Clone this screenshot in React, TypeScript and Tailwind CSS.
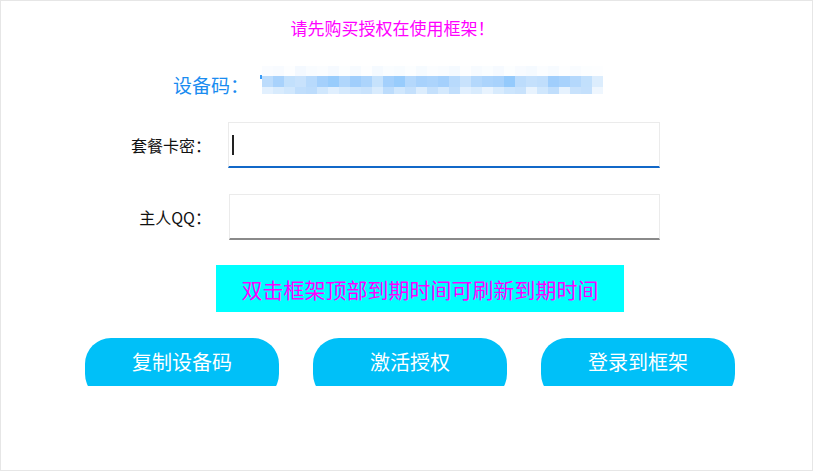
import React from "react";

const top = ["#fafcff","#f8fbff","#fdfeff","#f4f9ff","#f9fcff","#fbfdff","#f6faff","#fcfeff","#f7fbff","#fdfeff","#f5faff","#fafdff","#f8fcff","#fcfeff","#f6fbff","#fbfdff","#f9fcff","#f5faff","#fdfeff","#f7fbff","#fafdff","#f6faff","#fcfeff","#f8fbff","#f5faff","#fbfdff","#f7fbff","#fdfeff","#f9fcff","#fcfeff","#fdfeff"];
const mid = ["#bcdcfc","#a8d2fc","#c2e0fc","#c8e2fc","#b8dafc","#a4d0fc","#98ccfc","#b0d6fc","#a0cefc","#acd4fc","#c6e2fc","#a4d0fc","#98ccfc","#b4d8fc","#a8d2fc","#acd4fc","#a4d0fc","#b8dafc","#c8e2fc","#b4d8fc","#acd4fc","#a8d2fc","#94cafc","#bcdcfc","#c4e0fc","#c0defc","#a0cefc","#a8d2fc","#b4d8fc","#c2e0fc","#dcedfd"];
const bot = ["#e2f0fe","#d8ebfd","#d0e7fd","#c0defc","#bcdcfc","#d0e7fd","#e0effe","#d4e9fd","#cce5fd","#c8e2fc","#d8ebfd","#bcdcfc","#d0e7fd","#c4e0fc","#dcedfd","#c4e0fc","#d4e9fd","#c0defc","#e0effe","#d8ebfd","#e8f3fe","#d8ebfd","#cce5fd","#c8e2fc","#e8f3fe","#d0e7fd","#c0defc","#e6f2fe","#c8e2fc","#c4e0fc","#eef6fe"];

function Pixels() {
  return (
    <div className="flex flex-col">
      <div className="flex h-[10px]">
        {top.map((c, i) => (
          <div key={i} className="w-[11px] h-full" style={{ background: c }} />
        ))}
      </div>
      <div className="flex h-[11px]">
        {mid.map((c, i) => (
          <div key={i} className="w-[11px] h-full" style={{ background: c }} />
        ))}
      </div>
      <div className="flex h-[7px]">
        {bot.map((c, i) => (
          <div key={i} className="w-[11px] h-full" style={{ background: c }} />
        ))}
      </div>
    </div>
  );
}

function Btn({ label }: { label: string }) {
  return (
    <div className="w-[194px] h-[48px] overflow-hidden">
      <div className="w-full h-[62px] rounded-[26px] bg-[#00c0f8] flex justify-center pt-[10px]">
        <span className="text-white text-[20px] leading-[28px]">{label}</span>
      </div>
    </div>
  );
}

export default function App() {
  return (
    <div
      className="w-[813px] h-[471px] bg-white border border-[#e6e6e6] flex flex-col"
      style={{ fontFamily: '"Noto Sans CJK SC", "Noto Sans", sans-serif' }}
    >
      <div className="flex justify-center pr-[28px] pt-[15px] h-[62px]">
        <span className="text-[#ff00ff] text-[17px] leading-[24px]">请先购买授权在使用框架！</span>
      </div>
      <div className="flex items-center pl-[172px] h-[44px]">
        <span className="text-[#1a8cf0] text-[19px] leading-[28px]">设备码：</span>
        <div className="w-[2px] h-[4px] bg-[#3a9cf8] ml-[11px] mt-[-16px]" />
        <div className="mt-[-10px]">
          <Pixels />
        </div>
      </div>
      <div className="flex items-center mt-[15px] h-[46px]">
        <div className="w-[210px] text-right text-[16px] text-[#111]">套餐卡密：</div>
        <div className="ml-[17px] w-[432px] h-[46px] border border-[#ebebeb] border-b-2 border-b-[#1168c8] flex items-center pl-[3px]">
          <div className="w-[1.5px] h-[20px] bg-[#222]" />
        </div>
      </div>
      <div className="flex items-center mt-[26px] h-[46px]">
        <div className="w-[210px] text-right text-[16px] text-[#111]">主人QQ：</div>
        <div className="ml-[18px] w-[431px] h-[46px] border border-[#ebebeb] border-b-2 border-b-[#8a8a8a]" />
      </div>
      <div className="flex mt-[25px] pl-[215px]">
        <div className="w-[408px] h-[47px] bg-[#00ffff] flex items-center justify-center">
          <span className="text-[#ff00ff] text-[21px] leading-[28px]">双击框架顶部到期时间可刷新到期时间</span>
        </div>
      </div>
      <div className="flex gap-[34px] pl-[84px] mt-[26px]">
        <Btn label="复制设备码" />
        <Btn label="激活授权" />
        <Btn label="登录到框架" />
      </div>
    </div>
  );
}
